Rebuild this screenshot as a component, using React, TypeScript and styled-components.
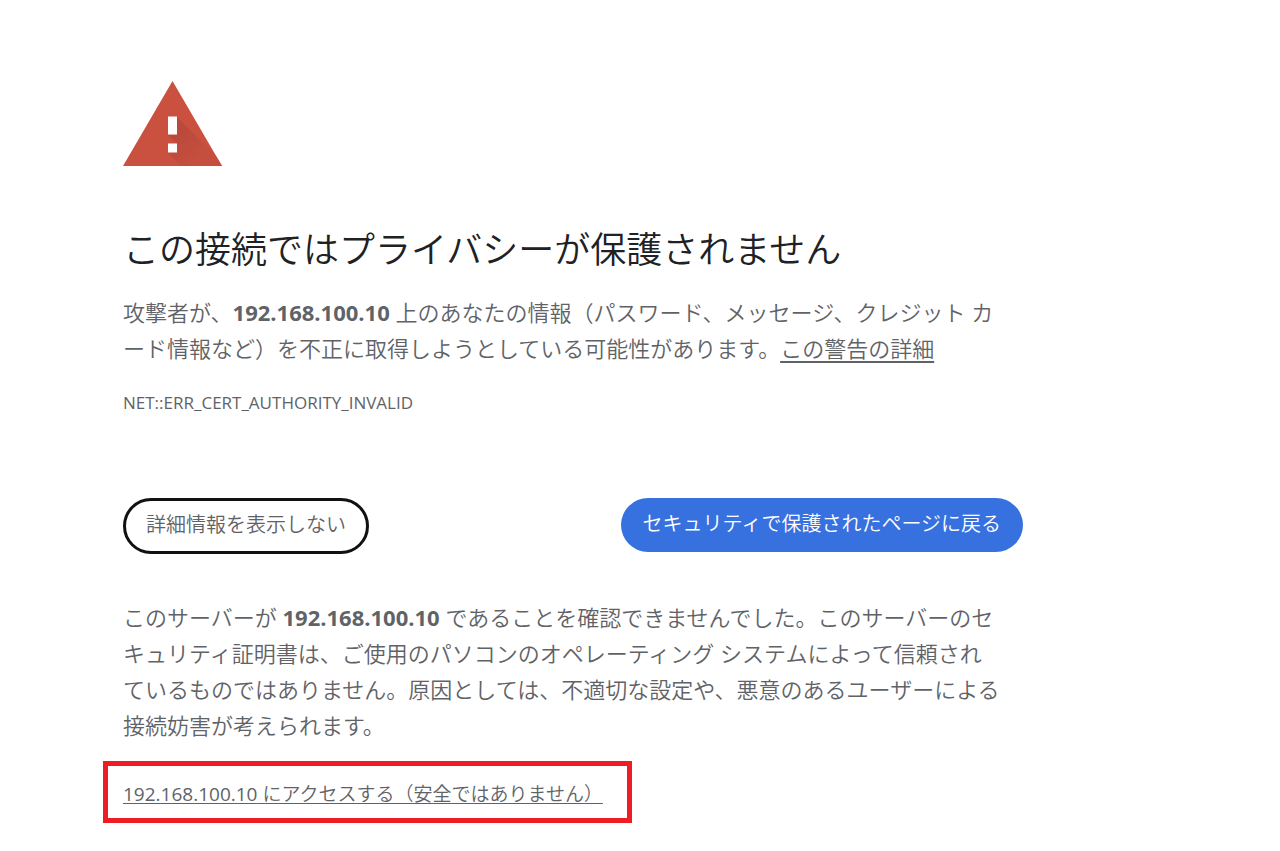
import React, { useState } from "react";
import styled, { createGlobalStyle } from "styled-components";

const GlobalStyle = createGlobalStyle`
  *, *::before, *::after { box-sizing: border-box; }
  body {
    margin: 0;
    background: #fff;
    color: #5f6368;
    font-family: "Open Sans", "Noto Sans CJK JP", sans-serif;
    font-size: 22px;
    font-weight: 350;
    line-height: 36px;
  }
`;

const Page = styled.main`
  max-width: 1043px;
  padding: 81px 20px 28px 123px;
`;

const WarningIcon = styled.svg`
  display: block;
  width: 99px;
  height: 85px;
`;

const Title = styled.h1`
  margin: 62px 0 22px;
  color: #202124;
  font-size: 36px;
  font-weight: 350;
  line-height: 44px;
`;

const Message = styled.p`
  margin: 0;
  padding-right: 16px;
  line-break: loose;

  strong { font-weight: 700; }
`;

const TextLink = styled.a`
  color: inherit;
  text-decoration: underline;
  text-decoration-thickness: 2px;
  text-underline-offset: 4px;
`;

const ErrorCode = styled.div`
  margin: 24px 0 82px;
  font-size: 17px;
  font-weight: 400;
  line-height: 26px;
`;

const Actions = styled.div`
  display: flex;
  flex-wrap: wrap;
  align-items: flex-start;
  justify-content: space-between;
  gap: 16px;
  margin-bottom: 45px;
`;

const PillButton = styled.button<{ $primary?: boolean }>`
  height: ${(p) => (p.$primary ? 54 : 56)}px;
  padding: 0 ${(p) => (p.$primary ? 22 : 20)}px 2px;
  border: ${(p) => (p.$primary ? "0" : "3px solid #111")};
  border-radius: 28px;
  background: ${(p) => (p.$primary ? "#3771e0" : "#fff")};
  color: ${(p) => (p.$primary ? "#fff" : "inherit")};
  font: inherit;
  font-size: 20px;
  cursor: pointer;
`;

const Highlight = styled.div`
  width: fit-content;
  margin: 18px 0 0 -20px;
  padding: 10px 24px 6px 15px;
  border: 5px solid #ee1c25;
  font-size: 19px;
`;

const ProceedLink = styled.a`
  color: inherit;
  text-decoration: underline;
  text-decoration-thickness: 1px;
  text-underline-offset: 2px;
`;

const HostName = styled.span`
  font-weight: 400;
`;

const HOST = "192.168.100.10";

export default function App() {
  const [open, setOpen] = useState(true);
  return (
    <>
      <GlobalStyle />
      <Page lang="ja">
        <WarningIcon viewBox="0 0 99 85" role="img" aria-label="警告">
          <defs>
            <linearGradient id="shade" x1="45" y1="35" x2="80" y2="70" gradientUnits="userSpaceOnUse">
              <stop offset="0" stopColor="#b4473a" />
              <stop offset="1" stopColor="#c54e3e" />
            </linearGradient>
            <clipPath id="triangle">
              <path d="M49.500 0L99 85H0Z" />
            </clipPath>
          </defs>
          <g clipPath="url(#triangle)">
            <path fill="#ca5140" d="M0 0H99V85H0Z" />
            <path fill="url(#shade)" d="M54 36L103 85H58L45 72L54 63L45 54H54Z" />
          </g>
          <path fill="#fff" d="M45 35.500H54V53.500H45ZM45 62.500H54V71.500H45Z" />
        </WarningIcon>
        <Title>この接続ではプライバシーが保護されません</Title>
        <Message>
          攻撃者が、<strong>{HOST}</strong> 上のあなたの情報（パスワード、メッセージ、クレジット カード情報など）を不正に取得しようとしている可能性があります。<TextLink href="#details">この警告の詳細</TextLink>
        </Message>
        <ErrorCode>NET::ERR_CERT_AUTHORITY_INVALID</ErrorCode>
        <Actions>
          <PillButton type="button" aria-expanded={open} onClick={() => setOpen(!open)}>
            {open ? "詳細情報を表示しない" : "詳細設定"}
          </PillButton>
          <PillButton type="button" $primary>
            セキュリティで保護されたページに戻る
          </PillButton>
        </Actions>
        {open && (
          <section id="details">
            <Message>
              このサーバーが <strong>{HOST}</strong> であることを確認できませんでした。このサーバーのセキュリティ証明書は、ご使用のパソコンのオペレーティング システムによって信頼され
              <br />
              ているものではありません。原因としては、不適切な設定や、悪意のあるユーザーによる
              <br />
              接続妨害が考えられます。
            </Message>
            <Highlight>
              <ProceedLink href="#proceed">
                <HostName>{HOST}</HostName> にアクセスする（安全ではありません）
              </ProceedLink>
            </Highlight>
          </section>
        )}
      </Page>
    </>
  );
}
